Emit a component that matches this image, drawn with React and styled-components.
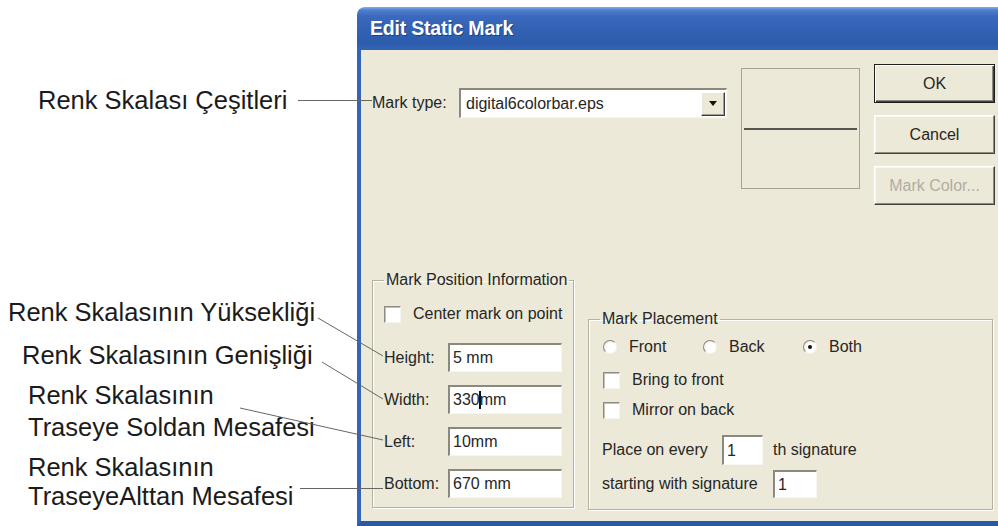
import React from "react";
import styled, { createGlobalStyle, css } from "styled-components";

const Global = createGlobalStyle`
  html, body { margin: 0; padding: 0; background: #fff; }
  body { font-family: "Liberation Sans", Arial, sans-serif; }
`;

const Stage = styled.div`
  position: relative;
  width: 998px;
  height: 526px;
  overflow: hidden;
  display: flex;
  align-items: flex-start;
  background: #fff;
`;

const Notes = styled.div`
  width: 357px;
  flex-shrink: 0;
  display: flex;
  flex-direction: column;
  align-items: flex-start;
`;

const Note = styled.div`
  margin-top: ${(p) => p.$top}px;
  margin-left: ${(p) => p.$left}px;
  font-size: 25.5px;
  line-height: ${(p) => p.$lh || 30}px;
  color: #1b1b1b;
  white-space: nowrap;
`;

const Leaders = styled.svg`
  position: absolute;
  left: 0;
  top: 0;
  z-index: 2;
  pointer-events: none;
`;

const Dialog = styled.section`
  margin-top: 7px;
  width: 650px;
  height: 519px;
  flex-shrink: 0;
  display: flex;
  flex-direction: column;
  border-radius: 8px 8px 0 0;
  overflow: hidden;
`;

const TitleBar = styled.header`
  height: 43px;
  flex-shrink: 0;
  box-sizing: border-box;
  display: flex;
  align-items: center;
  padding-left: 13px;
  background: linear-gradient(
    180deg,
    #86ade6 0px,
    #4f80d0 3px,
    #3a69bd 9px,
    #3262b4 22px,
    #2d5cad 36px,
    #3464b5 43px
  );
  color: #fff;
  font: bold 19.5px "Liberation Sans", Arial, sans-serif;
  letter-spacing: -0.2px;
  text-shadow: 1px 1px 0 rgba(12, 34, 96, 0.55);
`;

const Body = styled.div`
  flex: 1;
  background: #ece9d8;
  border-left: 4px solid #3264b7;
  border-bottom: 5px solid #2c56a6;
  padding-left: 11px;
  display: flex;
  flex-direction: column;
  font-size: 16px;
  color: #262626;
`;

const TopRow = styled.div`
  display: flex;
  align-items: flex-start;
`;

const MarkType = styled.div`
  margin-top: 38px;
  display: flex;
  align-items: center;
`;

const TypeLabel = styled.span`
  width: 87px;
  flex-shrink: 0;
`;

const sunken = css`
  box-sizing: border-box;
  background: #fff;
  border-style: solid;
  border-width: 2px 1px 1px 2px;
  border-color: #8b897f #f8f7f3 #f8f7f3 #8b897f;
`;

const Combo = styled.div`
  ${sunken};
  width: 268px;
  height: 30px;
  display: flex;
  align-items: center;
  justify-content: space-between;
  padding: 0 1px 0 5px;
`;

const DropBtn = styled.span`
  width: 24px;
  height: 24px;
  box-sizing: border-box;
  background: #ece9d8;
  border: 1px solid;
  border-color: #fff #3d3d3d #3d3d3d #fff;
  box-shadow: inset -1px -1px 0 #a09e94;
  display: flex;
  align-items: center;
  justify-content: center;
`;

const Preview = styled.div`
  margin: 18px 0 0 14px;
  width: 119px;
  height: 121px;
  box-sizing: border-box;
  border: 1px solid #a5a398;
  display: flex;
  align-items: center;
  padding: 0 2px;
`;

const PreviewLine = styled.div`
  height: 2px;
  flex: 1;
  background: #55564f;
`;

const ButtonCol = styled.div`
  margin: 14px 0 0 14px;
  display: flex;
  flex-direction: column;
  gap: 12px;
`;

const Btn = styled.button`
  width: 121px;
  height: 39px;
  box-sizing: border-box;
  font: 16px "Liberation Sans", Arial, sans-serif;
  background: #ece9d8;
  color: ${(p) => (p.disabled ? "#b0aea3" : "#262626")};
  border: 1px solid;
  border-color: #fff #404040 #404040 #fff;
  box-shadow: inset -1px -1px 0 #8e8c82, inset 1px 1px 0 #f7f6f1;
  padding: 0;
  ${(p) =>
    p.$default &&
    css`
      border: 1px solid #1e1e1e;
      box-shadow: inset 1px 1px 0 #fff, inset -1px -1px 0 #404040,
        inset -2px -2px 0 #8e8c82;
    `}
`;

const BottomRow = styled.div`
  display: flex;
  align-items: flex-start;
`;

const Group = styled.fieldset`
  margin: ${(p) => p.$mt}px 0 0 ${(p) => p.$ml || 0}px;
  width: ${(p) => p.$w}px;
  height: ${(p) => p.$h}px;
  min-width: 0;
  box-sizing: border-box;
  padding: 0 0 0 ${(p) => p.$pl}px;
  border: 1px solid #b3b1a4;
  box-shadow: inset 1px 1px 0 #fff, 1px 1px 0 #fff;
  display: flex;
  flex-direction: column;
  align-items: flex-start;
`;

const Legend = styled.legend`
  font-size: 16px;
  line-height: 18px;
  padding: 0 2px;
  margin-left: ${(p) => p.$ml || 0}px;
`;

const CheckRow = styled.label`
  margin-top: ${(p) => p.$mt}px;
  height: 18px;
  display: flex;
  align-items: center;
  gap: 12px;
  white-space: nowrap;
`;

const CheckBox = styled.span`
  width: 17px;
  height: 17px;
  box-sizing: border-box;
  background: #fff;
  border: 1px solid;
  border-color: #8d8b81 #f6f5f0 #f6f5f0 #8d8b81;
  box-shadow: inset 1px 1px 0 #c4c2b6;
  margin-left: ${(p) => p.$ml || 0}px;
`;

const FieldRow = styled.div`
  margin-top: ${(p) => p.$mt}px;
  height: ${(p) => p.$h || 29}px;
  display: flex;
  align-items: center;
  white-space: nowrap;
`;

const FieldLabel = styled.span`
  width: ${(p) => p.$w}px;
  flex-shrink: 0;
`;

const TextBox = styled.div`
  ${sunken};
  width: ${(p) => p.$w}px;
  height: ${(p) => p.$h || 29}px;
  padding-left: 3px;
  display: flex;
  align-items: center;
  margin-right: ${(p) => p.$mr || 0}px;
`;

const Caret = styled.span`
  display: inline-block;
  width: 2px;
  height: 18px;
  background: #111;
  vertical-align: -4px;
  margin: 0 -1px;
`;

const RadioRow = styled.div`
  margin-top: 10px;
  height: 18px;
  display: flex;
  align-items: center;
`;

const Option = styled.label`
  width: 100px;
  display: flex;
  align-items: center;
  gap: 12px;
`;

const Radio = styled.span`
  width: 14px;
  height: 14px;
  margin-left: 1px;
  border-radius: 50%;
  box-sizing: border-box;
  background: radial-gradient(circle at 60% 60%, #fff 0 45%, #e6e4da 100%);
  border: 1px solid;
  border-color: #8a887e #f4f3ee #f4f3ee #8a887e;
  display: flex;
  align-items: center;
  justify-content: center;
  &::after {
    content: "";
    width: 4px;
    height: 4px;
    border-radius: 50%;
    background: ${(p) => (p.$on ? "#111" : "transparent")};
  }
`;

const Arrow = () => (
  <svg width="8" height="5" viewBox="0 0 8 5">
    <polygon points="0,0 8,0 4,5" fill="#111" />
  </svg>
);

export default function App() {
  return (
    <>
      <Global />
      <Stage>
        <Notes>
          <Note $top={85} $left={38}>Renk Skalası Çeşitleri</Note>
          <Note $top={182} $left={8}>Renk Skalasının Yüksekliği</Note>
          <Note $top={13} $left={22}>Renk Skalasının Genişliği</Note>
          <Note $top={9} $left={28} $lh={32}>
            Renk Skalasının
            <br />
            Traseye Soldan Mesafesi
          </Note>
          <Note $top={10} $left={28} $lh={29}>
            Renk Skalasının
            <br />
            TraseyeAlttan Mesafesi
          </Note>
        </Notes>

        <Dialog>
          <TitleBar>Edit Static Mark</TitleBar>
          <Body>
            <TopRow>
              <MarkType>
                <TypeLabel>Mark type:</TypeLabel>
                <Combo>
                  <span>digital6colorbar.eps</span>
                  <DropBtn>
                    <Arrow />
                  </DropBtn>
                </Combo>
              </MarkType>
              <Preview>
                <PreviewLine />
              </Preview>
              <ButtonCol>
                <Btn $default>OK</Btn>
                <Btn>Cancel</Btn>
                <Btn disabled>Mark Color...</Btn>
              </ButtonCol>
            </TopRow>

            <BottomRow>
              <Group $mt={66} $w={202} $h={237} $pl={11}>
                <Legend>Mark Position Information</Legend>
                <CheckRow $mt={16}>
                  <CheckBox />
                  Center mark on point
                </CheckRow>
                <FieldRow $mt={20}>
                  <FieldLabel $w={64}>Height:</FieldLabel>
                  <TextBox $w={114}>5 mm</TextBox>
                </FieldRow>
                <FieldRow $mt={13}>
                  <FieldLabel $w={64}>Width:</FieldLabel>
                  <TextBox $w={114}>
                    <span>
                      330
                      <Caret />
                      mm
                    </span>
                  </TextBox>
                </FieldRow>
                <FieldRow $mt={13}>
                  <FieldLabel $w={64}>Left:</FieldLabel>
                  <TextBox $w={114}>10mm</TextBox>
                </FieldRow>
                <FieldRow $mt={13}>
                  <FieldLabel $w={64}>Bottom:</FieldLabel>
                  <TextBox $w={114}>670 mm</TextBox>
                </FieldRow>
              </Group>

              <Group $mt={105} $ml={14} $w={405} $h={200} $pl={13}>
                <Legend $ml={-2}>Mark Placement</Legend>
                <RadioRow>
                  <Option>
                    <Radio />
                    Front
                  </Option>
                  <Option>
                    <Radio />
                    Back
                  </Option>
                  <Option>
                    <Radio $on />
                    Both
                  </Option>
                </RadioRow>
                <CheckRow $mt={15}>
                  <CheckBox $ml={1} />
                  Bring to front
                </CheckRow>
                <CheckRow $mt={12}>
                  <CheckBox $ml={1} />
                  Mirror on back
                </CheckRow>
                <FieldRow $mt={16} $h={30}>
                  <FieldLabel $w={120}>Place on every</FieldLabel>
                  <TextBox $w={41} $h={30} $mr={10}>1</TextBox>
                  th signature
                </FieldRow>
                <FieldRow $mt={5} $h={28}>
                  <FieldLabel $w={171}>starting with signature</FieldLabel>
                  <TextBox $w={44} $h={28}>1</TextBox>
                </FieldRow>
              </Group>
            </BottomRow>
          </Body>
        </Dialog>

        <Leaders width="998" height="526" viewBox="0 0 998 526">
          <g stroke="#666" strokeWidth="1" fill="none">
            <line x1="298" y1="100.5" x2="372" y2="100.5" />
            <line x1="318" y1="318" x2="383" y2="356" />
            <line x1="322" y1="362" x2="383" y2="399" />
            <line x1="240" y1="408" x2="383" y2="440" />
            <line x1="300" y1="488.5" x2="383" y2="488.5" />
          </g>
        </Leaders>
      </Stage>
    </>
  );
}
